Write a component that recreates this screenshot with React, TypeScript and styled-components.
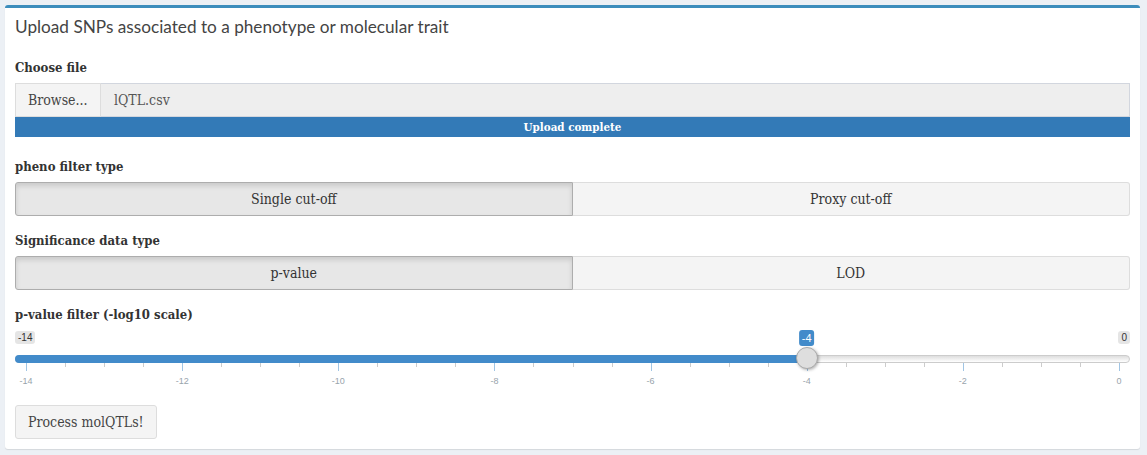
import React from "react";
import styled, { createGlobalStyle } from "styled-components";

const SERIF = `"DejaVu Serif", "Liberation Serif", serif`;

const Global = createGlobalStyle`
  html, body { margin: 0; padding: 0; background: #ecf0f5; }
  body { font-family: ${SERIF}; color: #333; }
  * { box-sizing: border-box; }
`;

const Page = styled.div`
  padding: 5px 7px 6px 5px;
`;

const Box = styled.section`
  background: #fff;
  border-top: 3px solid #3c8dbc;
  border-radius: 3px;
  box-shadow: 0 1px 1px rgba(0, 0, 0, 0.1);
`;

const BoxHeader = styled.header`
  padding: 9px 10px 11px;
  height: 40px;
`;

const Title = styled.h3`
  margin: 0;
  font-family: "Lato", "Open Sans", sans-serif;
  font-weight: 400;
  font-size: 17.2px;
  line-height: 20px;
  color: #444;
`;

const BoxBody = styled.div`
  padding: 10px;
  display: flex;
  flex-direction: column;
`;

const Group = styled.div<{ $mb?: number }>`
  display: flex;
  flex-direction: column;
  margin-bottom: ${(p) => p.$mb ?? 15}px;
`;

const Label = styled.label`
  font-family: ${SERIF};
  font-stretch: condensed;
  font-weight: 700;
  font-size: 13px;
  line-height: 20px;
  margin-bottom: 5px;
  color: #333;
`;

const FileRow = styled.div`
  display: flex;
  height: 34px;
`;

const BrowseBtn = styled.span`
  display: flex;
  align-items: center;
  padding: 0 12px;
  width: 86px;
  background: #f4f4f4;
  border: 1px solid #ddd;
  font-family: ${SERIF};
  font-stretch: condensed;
  font-size: 14px;
  color: #444;
`;

const FileField = styled.span`
  flex: 1;
  display: flex;
  align-items: center;
  padding: 0 13px;
  background: #eee;
  border: 1px solid #d2d6de;
  border-left: none;
  font-family: ${SERIF};
  font-stretch: condensed;
  font-size: 14px;
  color: #555;
`;

const Progress = styled.div`
  height: 20px;
  background: #337ab7;
  color: #fff;
  display: flex;
  align-items: center;
  justify-content: center;
  font-family: ${SERIF};
  font-stretch: condensed;
  font-size: 11.5px;
  font-weight: 700;
`;

const BtnGroup = styled.div`
  display: grid;
  grid-template-columns: 1fr 1fr;
  height: 34px;
`;

const ToggleBtn = styled.button<{ $active?: boolean }>`
  font-family: ${SERIF};
  font-stretch: condensed;
  font-size: 14px;
  color: #333;
  border: 1px solid ${(p) => (p.$active ? "#adadad" : "#ddd")};
  background: ${(p) => (p.$active ? "#e7e7e7" : "#f4f4f4")};
  box-shadow: ${(p) => (p.$active ? "inset 0 3px 5px rgba(0,0,0,0.125)" : "none")};
  border-radius: ${(p) => (p.$active ? "3px 0 0 3px" : "0 3px 3px 0")};
  ${(p) => (p.$active ? "" : "border-left: none;")}
  padding: 0;
  cursor: pointer;
`;

const Slider = styled.div`
  position: relative;
  height: 60px;
  font-family: "Liberation Sans", Arial, sans-serif;
`;

const Line = styled.div`
  position: absolute;
  left: 0;
  right: 0;
  top: 25px;
  height: 8px;
  border: 1px solid #ccc;
  border-radius: 16px;
  background: linear-gradient(to bottom, #dedede 0%, #fff 100%);
`;

const Bar = styled.div`
  position: absolute;
  left: 0;
  top: 25px;
  height: 8px;
  background: #428bca;
  border-radius: 16px 0 0 16px;
`;

const Handle = styled.div`
  position: absolute;
  top: 17px;
  width: 22px;
  height: 22px;
  margin-left: -11px;
  border: 1px solid #aaa;
  border-radius: 50%;
  background: #dedede;
  box-shadow: 1px 1px 3px rgba(0, 0, 0, 0.3);
`;

const EdgeLabel = styled.span<{ $side: "left" | "right" }>`
  position: absolute;
  top: 1px;
  ${(p) => (p.$side === "left" ? "left: 0;" : "right: 0;")}
  font-size: 10px;
  line-height: 13px;
  padding: 0 3px;
  color: #333;
  background: rgba(0, 0, 0, 0.1);
  border-radius: 3px;
`;

const ValueLabel = styled.span`
  position: absolute;
  top: 0;
  transform: translateX(-50%);
  font-size: 11px;
  line-height: 16px;
  padding: 0 3px;
  color: #fff;
  background: #428bca;
  border-radius: 3px;
`;

const Tick = styled.span<{ $major?: boolean }>`
  position: absolute;
  top: 33px;
  width: 1px;
  height: ${(p) => (p.$major ? 8 : 4)}px;
  background: ${(p) => (p.$major ? "#428bca" : "#999")};
  opacity: 0.5;
`;

const TickText = styled.span`
  position: absolute;
  top: 46px;
  transform: translateX(-50%);
  font-size: 9px;
  line-height: 11px;
  color: #99a4ac;
`;

const ActionBtn = styled.button`
  align-self: flex-start;
  height: 34px;
  padding: 0 12px;
  background: #f4f4f4;
  border: 1px solid #ddd;
  border-radius: 3px;
  font-family: ${SERIF};
  font-stretch: condensed;
  font-size: 14px;
  color: #444;
  cursor: pointer;
`;

const MIN = -14;
const MAX = 0;
const VALUE = -4;
const WIDTH = 1115;
const pos = (v: number) => 11 + ((v - MIN) / (MAX - MIN)) * (WIDTH - 22);

export default function App() {
  const ticks: { x: number; major: boolean; label?: string }[] = [];
  for (let i = 0; i <= 28; i++) {
    const v = MIN + i * 0.5;
    const major = i % 4 === 0;
    ticks.push({ x: pos(v), major, label: major ? String(v) : undefined });
  }
  return (
    <Page>
      <Global />
      <Box>
        <BoxHeader>
          <Title>Upload SNPs associated to a phenotype or molecular trait</Title>
        </BoxHeader>
        <BoxBody>
          <Group $mb={20}>
            <Label>Choose file</Label>
            <FileRow>
              <BrowseBtn>Browse...</BrowseBtn>
              <FileField>lQTL.csv</FileField>
            </FileRow>
            <Progress>Upload complete</Progress>
          </Group>
          <Group>
            <Label>pheno filter type</Label>
            <BtnGroup>
              <ToggleBtn $active>Single cut-off</ToggleBtn>
              <ToggleBtn>Proxy cut-off</ToggleBtn>
            </BtnGroup>
          </Group>
          <Group>
            <Label>Significance data type</Label>
            <BtnGroup>
              <ToggleBtn $active>p-value</ToggleBtn>
              <ToggleBtn>LOD</ToggleBtn>
            </BtnGroup>
          </Group>
          <Group $mb={15}>
            <Label>p-value filter (-log10 scale)</Label>
            <Slider>
              <Line />
              <Bar style={{ width: pos(VALUE) }} />
              {ticks.map((t, i) => (
                <React.Fragment key={i}>
                  <Tick $major={t.major} style={{ left: t.x }} />
                  {t.label && <TickText style={{ left: t.x }}>{t.label}</TickText>}
                </React.Fragment>
              ))}
              <EdgeLabel $side="left">-14</EdgeLabel>
              <EdgeLabel $side="right">0</EdgeLabel>
              <ValueLabel style={{ left: pos(VALUE) }}>-4</ValueLabel>
              <Handle style={{ left: pos(VALUE) }} />
            </Slider>
          </Group>
          <ActionBtn>Process molQTLs!</ActionBtn>
        </BoxBody>
      </Box>
    </Page>
  );
}
